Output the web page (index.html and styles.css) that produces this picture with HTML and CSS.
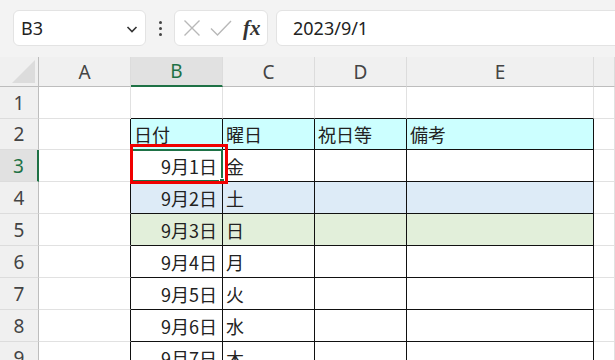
FILE: index.html
```html
<!DOCTYPE html>
<html lang="ja">
<head>
    <meta charset="UTF-8">
    <title>Sheet</title>
    <link rel="stylesheet" href="styles.css">
</head>
<body>
    <div class="toolbar">
        <div class="name-box">
            <span>B3</span>
            <svg class="chevron" width="12" height="10" viewBox="0 0 12 10"><path d="M1.5 3 L6 7.5 L10.5 3" fill="none" stroke="#333" stroke-width="1.6"/></svg>
        </div>
        <div class="grip"><i></i><i></i><i></i></div>
        <div class="fx-box">
            <svg width="18" height="18" viewBox="0 0 18 18"><path d="M1.5 1.5 L16.5 16.5 M16.5 1.5 L1.5 16.5" stroke="#b8b8b8" stroke-width="1.4"/></svg>
            <svg width="22" height="18" viewBox="0 0 22 18"><path d="M1 9.5 L7.5 16 L21 2" fill="none" stroke="#b8b8b8" stroke-width="1.4"/></svg>
            <span class="fx">fx</span>
        </div>
        <div class="formula">2023/9/1</div>
    </div>

    <div class="sheet">
        <div class="corner"><span class="tri"></span></div>
        <div class="col-hd">A</div>
        <div class="col-hd sel">B</div>
        <div class="col-hd">C</div>
        <div class="col-hd">D</div>
        <div class="col-hd">E</div>
        <div class="col-hd"></div>

        <div class="row-hd">1</div>
        <div class="cell"></div>
        <div class="cell above"></div>
        <div class="cell above"></div>
        <div class="cell above"></div>
        <div class="cell above"></div>
        <div class="cell"></div>

        <div class="row-hd">2</div>
        <div class="cell before"></div>
        <div class="cell tb head">日付</div>
        <div class="cell tb head">曜日</div>
        <div class="cell tb head">祝日等</div>
        <div class="cell tb head">備考</div>
        <div class="cell"></div>

        <div class="row-hd sel">3</div>
        <div class="cell before"></div>
        <div class="cell tb num">9月1日</div>
        <div class="cell tb">金</div>
        <div class="cell tb"></div>
        <div class="cell tb"></div>
        <div class="cell"></div>

        <div class="row-hd">4</div>
        <div class="cell before"></div>
        <div class="cell tb num sat">9月2日</div>
        <div class="cell tb sat">土</div>
        <div class="cell tb sat"></div>
        <div class="cell tb sat"></div>
        <div class="cell"></div>

        <div class="row-hd">5</div>
        <div class="cell before"></div>
        <div class="cell tb num sun">9月3日</div>
        <div class="cell tb sun">日</div>
        <div class="cell tb sun"></div>
        <div class="cell tb sun"></div>
        <div class="cell"></div>

        <div class="row-hd">6</div>
        <div class="cell before"></div>
        <div class="cell tb num">9月4日</div>
        <div class="cell tb">月</div>
        <div class="cell tb"></div>
        <div class="cell tb"></div>
        <div class="cell"></div>

        <div class="row-hd">7</div>
        <div class="cell before"></div>
        <div class="cell tb num">9月5日</div>
        <div class="cell tb">火</div>
        <div class="cell tb"></div>
        <div class="cell tb"></div>
        <div class="cell"></div>

        <div class="row-hd">8</div>
        <div class="cell before"></div>
        <div class="cell tb num">9月6日</div>
        <div class="cell tb">水</div>
        <div class="cell tb"></div>
        <div class="cell tb"></div>
        <div class="cell"></div>

        <div class="row-hd">9</div>
        <div class="cell before"></div>
        <div class="cell tb num">9月7日</div>
        <div class="cell tb">木</div>
        <div class="cell tb"></div>
        <div class="cell tb"></div>
        <div class="cell"></div>

        <!-- active cell B3 and the red mark over it -->
        <div class="active"><span class="handle"></span></div>
        <div class="mark"></div>
    </div>
</body>
</html>
```

FILE: styles.css
```css
* {
    margin: 0;
    padding: 0;
    box-sizing: border-box;
}

body {
    width: 615px;
    height: 360px;
    overflow: hidden;
    background: #ffffff;
    font-family: "Noto Sans", "Noto Sans CJK JP", sans-serif;
    color: #333;
}

.toolbar {
    height: 57px;
    background: #f3f3f3;
    display: flex;
    align-items: flex-start;
    padding: 10px 0 0 13px;
}

.name-box {
    width: 133px;
    height: 36px;
    background: #fff;
    border: 1px solid #e3e3e3;
    border-radius: 6px;
    display: flex;
    align-items: center;
    justify-content: space-between;
    padding: 0 7px 0 7px;
    font-size: 18px;
    color: #222;
}

.chevron {
    margin-top: 2px;
}

.grip {
    width: 28px;
    height: 36px;
    display: flex;
    flex-direction: column;
    align-items: center;
    justify-content: center;
    gap: 3px;
}

.grip i {
    width: 3px;
    height: 3px;
    border-radius: 50%;
    background: #444;
}

.fx-box {
    width: 94px;
    height: 36px;
    background: #fff;
    border: 1px solid #e3e3e3;
    border-radius: 6px;
    display: flex;
    align-items: center;
    padding-left: 8px;
    gap: 9px;
}

.fx {
    font-family: "Liberation Serif", serif;
    font-style: italic;
    font-weight: bold;
    font-size: 21px;
    color: #333;
    margin-left: 2px;
}

.formula {
    flex: 1;
    height: 36px;
    margin-left: 8px;
    margin-right: -10px;
    background: #fff;
    border: 1px solid #e3e3e3;
    border-radius: 6px;
    display: flex;
    align-items: center;
    padding-left: 16px;
    font-size: 18px;
    color: #222;
}

.sheet {
    position: relative;
    display: grid;
    grid-template-columns: 39px 92px 92px 92px 92px 187px 1fr;
    grid-template-rows: 30px 32px 31px repeat(7, 32px);
}

.corner {
    background: #f0f0f0;
    border-right: 1px solid #bdbdbd;
    border-bottom: 1px solid #bdbdbd;
    position: relative;
}

.tri {
    position: absolute;
    left: 12px;
    top: 3px;
    width: 0;
    height: 0;
    border-left: 23px solid transparent;
    border-bottom: 23px solid #dcdcdc;
}

.col-hd {
    background: #f0f0f0;
    border-right: 1px solid #dcdcdc;
    border-bottom: 1px solid #bdbdbd;
    display: flex;
    align-items: center;
    justify-content: center;
    font-size: 19px;
    color: #444;
}

.col-hd.sel {
    background: #e1e1e1;
    color: #1e7145;
    border-bottom: 2px solid #1e7145;
}

.row-hd {
    background: #f0f0f0;
    border-right: 1px solid #bdbdbd;
    border-bottom: 1px solid #dcdcdc;
    display: flex;
    align-items: center;
    justify-content: center;
    font-size: 19px;
    color: #444;
}

.row-hd.sel {
    background: #e1e1e1;
    color: #1e7145;
    border-right: 2px solid #1e7145;
}

.cell {
    border-right: 1px solid #e1e1e1;
    border-bottom: 1px solid #e1e1e1;
    display: flex;
    align-items: center;
    padding: 0 3px;
    font-family: "Noto Sans CJK JP", sans-serif;
    font-size: 18px;
    color: #222;
    white-space: nowrap;
}

.cell.above {
    border-bottom-color: #111;
}

.cell.before {
    border-right-color: #111;
}

.cell.tb {
    border-right-color: #111;
    border-bottom-color: #111;
}

.cell.num {
    justify-content: flex-end;
    padding-right: 5px;
}

.head {
    background: #ccffff;
}

.sat {
    background: #ddebf7;
}

.sun {
    background: #e2efda;
}

.active {
    position: absolute;
    left: 130px;
    top: 92px;
    width: 93px;
    height: 33px;
    border: 2px solid #1e7145;
}

.handle {
    position: absolute;
    right: -4px;
    bottom: -4px;
    width: 6px;
    height: 6px;
    background: #1e7145;
    border: 1px solid #fff;
}

.mark {
    position: absolute;
    left: 130px;
    top: 87px;
    width: 98px;
    height: 40px;
    border: 3px solid #f00000;
}
```
